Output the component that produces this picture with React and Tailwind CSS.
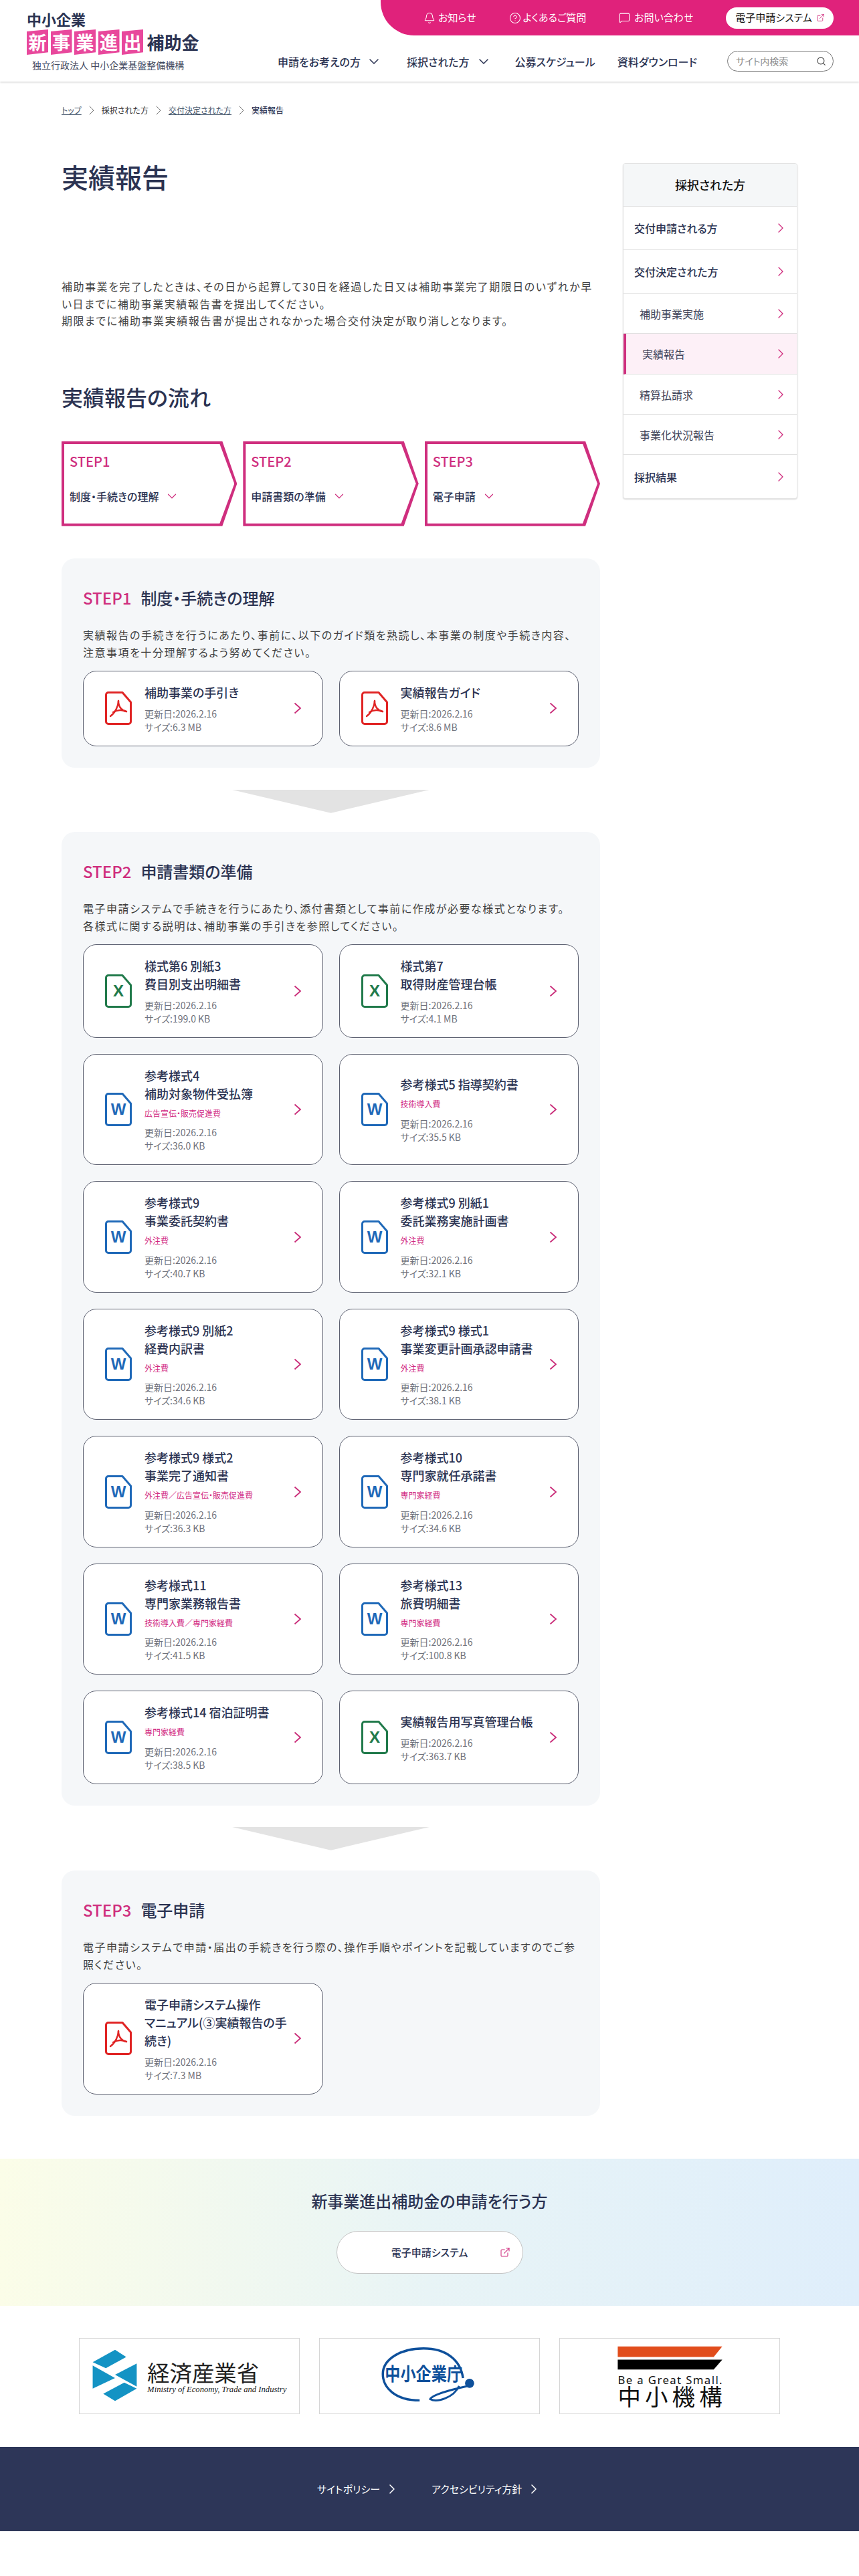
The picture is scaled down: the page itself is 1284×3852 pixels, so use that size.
import React from "react";
import { Bell, CircleHelp, MessageSquare, ExternalLink, Search, ChevronDown, ChevronRight } from "lucide-react";

const FONT = { fontFamily: '"Noto Sans CJK JP","Noto Sans",sans-serif' };

function DocIcon({ type }) {
  const color = type === "pdf" ? "#e02424" : type === "x" ? "#217a4b" : "#1f69b8";
  return (
    <svg width="40" height="50" viewBox="0 0 40 50" className="shrink-0" fill="none">
      <path d="M5 1.5H26L38.5 16V45a3.5 3.5 0 0 1-3.5 3.5H5A3.5 3.5 0 0 1 1.5 45V5A3.5 3.5 0 0 1 5 1.5Z" fill="#fff" stroke={color} strokeWidth="3" strokeLinejoin="round" />
      {type === "pdf" && (
        <g stroke={color} strokeWidth="2.4" strokeLinecap="round" fill="none">
          <path d="M20 14C20 22 15 32 8 37" />
          <path d="M20 14C20 24 26 29 32 30" />
          <path d="M12 31C18 27.5 26 27 32 30" />
        </g>
      )}
      {type === "x" && <text x="20" y="33" textAnchor="middle" fontSize="24" fontWeight="700" fill={color} fontFamily="Liberation Sans, sans-serif">X</text>}
      {type === "w" && <text x="20" y="33" textAnchor="middle" fontSize="24" fontWeight="700" fill={color} fontFamily="Liberation Sans, sans-serif">W</text>}
    </svg>
  );
}

function FileCard({ type, title, tag, date = "2026.2.16", size }) {
  return (
    <a className="flex items-center bg-white border border-[#5c6070] rounded-[20px] pl-[32px] pr-[31px] py-[18px]">
      <DocIcon type={type} />
      <div className="ml-[19px] w-[220px] shrink-0">
        <div className="text-[18px] leading-[27px] font-medium text-[#2b3352] whitespace-pre-line">{title}</div>
        {tag && <div className="mt-[7px] pb-[1.5px] text-[12px] leading-[18px] text-[#d1277f]">{tag}</div>}
        <div className="mt-[8px] text-[14px] leading-[20px] text-[#6f727b]">更新日:{date}</div>
        <div className="text-[14px] leading-[20px] text-[#6f727b]">サイズ:{size}</div>
      </div>
      <svg width="12" height="18" viewBox="0 0 12 18" className="ml-auto shrink-0" fill="none">
        <path d="M1.5 1.5 10 9 1.5 16.5" stroke="#c92b78" strokeWidth="1.8" />
      </svg>
    </a>
  );
}

function StepPanel({ step, title, text, children }) {
  return (
    <section className="bg-[#f5f7f9] rounded-[20px] px-[32px] pt-[41px] pb-[32px]">
      <h3 className="flex text-[24px] leading-[36px] font-medium text-[#2b3352]">
        <span className="text-[#cf2e7e] mr-[14px]">{step}</span>
        {title}
      </h3>
      <p className="mt-[24px] text-[16px] leading-[26px] tracking-[0.095em] text-[#3f3f3f] whitespace-pre-line">{text}</p>
      <div className="mt-[15px] grid grid-cols-2 gap-6">{children}</div>
    </section>
  );
}

function DownArrow() {
  return <div className="mx-auto w-[297px] h-[35px] bg-[#e3e3e3] [clip-path:polygon(0_0,100%_0,50%_100%)]" />;
}

function FlowStep({ step, label }) {
  return (
    <div className="flex-1 h-[127px] p-[4px] bg-[#cf2e7e] [clip-path:polygon(0_0,calc(100%-22px)_0,100%_50%,calc(100%-22px)_100%,0_100%)]">
      <div className="h-full bg-white pl-[8px] pt-[11px] [clip-path:polygon(0_0,calc(100%-22px)_0,100%_50%,calc(100%-22px)_100%,0_100%)]">
        <div className="text-[20px] leading-[30px] font-medium text-[#cf2e7e]">{step}</div>
        <div className="mt-[25px] flex items-center text-[16px] leading-[24px] font-medium text-[#2b3352]">
          {label}
          <ChevronDown className="ml-[9px] w-[22px] h-[22px] text-[#cf2e7e]" strokeWidth={1.3} />
        </div>
      </div>
    </div>
  );
}

function SideRow({ label, h, child, active, last }) {
  return (
    <a className={`flex items-center justify-between pr-[12px] ${h} ${last ? "" : "border-b border-[#e0e0e0]"} ${child ? "pl-[24px] font-normal text-[#3d4257]" : "pl-[16px] font-medium text-[#2b3352]"} ${active ? "bg-[#fdf0f7] border-l-4 border-l-[#cf2e7e] pl-[20px]" : ""} text-[16px]`}>
      {label}
      <ChevronRight className="w-[24px] h-[24px] text-[#cf2e7e]" strokeWidth={1.3} />
    </a>
  );
}

function Logo() {
  const tiles = ["新", "事", "業", "進", "出"];
  return (
    <div className="pl-[40px] pt-[14px] w-[330px] shrink-0">
      <div className="text-[22px] leading-[28px] font-bold text-[#2b3352]">中小企業</div>
      <div className="mt-[2px] flex items-center">
        {tiles.map((t) => (
          <span key={t} className="w-[32px] h-[38px] mr-[3.5px] flex items-center justify-center bg-[#e8489c] text-white text-[27px] font-bold [clip-path:polygon(0_8%,100%_0,100%_90%,0_100%)]">{t}</span>
        ))}
        <span className="ml-[2px] text-[26px] leading-[38px] font-bold text-[#2b3352]">補助金</span>
      </div>
      <div className="mt-[5px] pl-[8px] text-[14px] leading-[20px] text-[#444a60] whitespace-nowrap">独立行政法人 中小企業基盤整備機構</div>
    </div>
  );
}

function Header() {
  const nav = "text-[16px] font-medium text-[#2b3352] whitespace-nowrap";
  return (
    <header className="h-[122px] bg-white shadow-[0_1px_3px_rgba(0,0,0,0.2)] flex">
      <Logo />
      <div className="flex-1 flex flex-col">
        <div className="ml-auto w-[715px] h-[53px] bg-[#e0227b] rounded-bl-[50px] flex items-center pl-[64px] text-white text-[15px]">
          <a className="flex items-center"><Bell className="w-[18px] h-[18px] mr-[4px]" strokeWidth={1.4} />お知らせ</a>
          <a className="flex items-center ml-[49px]"><CircleHelp className="w-[18px] h-[18px] mr-[3px]" strokeWidth={1.4} />よくあるご質問</a>
          <a className="flex items-center ml-[49px]"><MessageSquare className="w-[17px] h-[17px] mr-[6px]" strokeWidth={1.6} />お問い合わせ</a>
          <a className="flex items-center ml-[49px] w-[161px] h-[32px] bg-white rounded-full text-[#111] pl-[14px]">電子申請システム<ExternalLink className="ml-[6px] w-[13px] h-[13px] text-[#cf2e7e]" strokeWidth={1.6} /></a>
        </div>
        <div className="flex items-center mt-[23px] pl-[85px]">
          <a className={`${nav} flex items-center`}>申請をお考えの方<ChevronDown className="ml-[8px] w-[24px] h-[24px]" strokeWidth={1.5} /></a>
          <a className={`${nav} flex items-center ml-[37px]`}>採択された方<ChevronDown className="ml-[9px] w-[24px] h-[24px]" strokeWidth={1.5} /></a>
          <a className={`${nav} ml-[35px]`}>公募スケジュール</a>
          <a className={`${nav} ml-[33px]`}>資料ダウンロード</a>
          <div className="ml-[45px] w-[159px] h-[31px] rounded-full border border-[#777] flex items-center justify-between pl-[12px] pr-[10px] text-[14px] text-[#8b8b8b]">
            サイト内検索
            <Search className="w-[15px] h-[15px] text-[#444]" strokeWidth={1.8} />
          </div>
        </div>
      </div>
    </header>
  );
}

function Crumb() {
  const sep = <ChevronRight className="mx-[3px] w-[24px] h-[24px] -my-[4px] text-[#777]" strokeWidth={1} />;
  return (
    <nav className="pt-[34px] pl-[92px] flex items-center text-[12px] leading-[18px] text-[#333]">
      <a className="underline text-[#44566b]">トップ</a>{sep}
      <span>採択された方</span>{sep}
      <a className="underline text-[#44566b]">交付決定された方</a>{sep}
      <span className="font-medium text-[#2b3352]">実績報告</span>
    </nav>
  );
}

function Sidebar() {
  return (
    <aside className="ml-[34px] w-[261px] shrink-0 mt-[70px] self-start bg-white rounded-[4px] border border-[#e3e3e3] shadow-[0_1px_2px_rgba(0,0,0,0.15)] overflow-hidden">
      <div className="h-[64px] flex items-center justify-center bg-[#f5f7f8] border-b border-[#e0e0e0] text-[18px] font-medium text-[#111]">採択された方</div>
      <SideRow label="交付申請される方" h="h-[65px]" />
      <SideRow label="交付決定された方" h="h-[65px]" />
      <SideRow label="補助事業実施" h="h-[60px]" child />
      <SideRow label="実績報告" h="h-[61px]" child active />
      <SideRow label="精算払請求" h="h-[60px]" child />
      <SideRow label="事業化状況報告" h="h-[60px]" child />
      <SideRow label="採択結果" h="h-[65px]" last />
    </aside>
  );
}

function MetiLogo() {
  return (
    <svg viewBox="0 0 330 114" className="w-full h-full">
      <g fill="#1493c4">
        <polygon points="52,17 69,28 38,45 18,36" />
        <polygon points="18,41 52,60 18,76" />
        <polygon points="85,38 85,73 52,55" />
        <polygon points="66,67 85,76 52,95 34,84" />
      </g>
      <text x="101" y="65" fontSize="34" fill="#222" fontFamily='"Noto Sans CJK JP",sans-serif'>経済産業省</text>
      <text x="101" y="81" fontSize="13" fontStyle="italic" fill="#222" fontFamily='"Liberation Serif",serif' textLength="212" lengthAdjust="spacingAndGlyphs">Ministry of Economy, Trade and Industry</text>
    </svg>
  );
}

function SmeLogo() {
  return (
    <svg viewBox="0 0 330 114" className="w-full h-full">
      <path d="M150 94C112 94 94 74 94 54C94 32 120 15 156 15C190 15 212 32 216 60" fill="none" stroke="#0e509b" strokeWidth="3.5" />
      <circle cx="226" cy="68" r="7" fill="#0e509b" />
      <path d="M224 72C206 76 170 84 166 92C176 98 202 90 210 72" fill="none" stroke="#0e509b" strokeWidth="3" />
      <text x="97" y="64" fontSize="28" fontWeight="700" fill="#0e509b" fontFamily='"Noto Sans CJK JP",sans-serif' textLength="118" lengthAdjust="spacingAndGlyphs">中小企業庁</text>
    </svg>
  );
}

function SmrjLogo() {
  return (
    <svg viewBox="0 0 330 114" className="w-full h-full">
      <polygon points="86,12 245,12 232,28 86,28" fill="#e14d1c" />
      <polygon points="86,32 245,32 232,47 86,47" fill="#000" />
      <text x="86" y="69" fontSize="17" fill="#111" fontFamily='"Noto Sans",sans-serif' textLength="159" lengthAdjust="spacing">Be a Great Small.</text>
      <text x="86" y="102" fontSize="35" fill="#111" fontFamily='"Noto Sans CJK JP",sans-serif' textLength="159" lengthAdjust="spacing">中小機構</text>
    </svg>
  );
}

export default function App() {
  return (
    <div style={FONT} className="bg-white text-[#333] [font-feature-settings:'palt']">
      <Header />
      <Crumb />
      <div className="flex pl-[92px]">
        <main className="w-[805px] shrink-0 pt-[60px]">
          <h1 className="text-[40px] leading-[60px] font-medium text-[#2b3352]">実績報告</h1>
          <p className="mt-[122px] text-[16px] leading-[25.6px] tracking-[0.095em] text-[#3f3f3f]">
            補助事業を完了したときは、その日から起算して30日を経過した日又は補助事業完了期限日のいずれか早い日までに補助事業実績報告書を提出してください。<br />
            期限までに補助事業実績報告書が提出されなかった場合交付決定が取り消しとなります。
          </p>
          <h2 className="mt-[76px] text-[32px] leading-[48px] font-medium text-[#2b3352]">実績報告の流れ</h2>
          <div className="mt-[43px] flex gap-[9px]">
            <FlowStep step="STEP1" label="制度・手続きの理解" />
            <FlowStep step="STEP2" label="申請書類の準備" />
            <FlowStep step="STEP3" label="電子申請" />
          </div>

          <div className="mt-[48px]">
            <StepPanel step="STEP1" title="制度・手続きの理解" text="実績報告の手続きを行うにあたり、事前に、以下のガイド類を熟読し、本事業の制度や手続き内容、注意事項を十分理解するよう努めてください。">
              <FileCard type="pdf" title="補助事業の手引き" size="6.3 MB" />
              <FileCard type="pdf" title="実績報告ガイド" size="8.6 MB" />
            </StepPanel>
          </div>
          <div className="mt-[33px] mb-[28px]"><DownArrow /></div>
          <StepPanel step="STEP2" title="申請書類の準備" text={"電子申請システムで手続きを行うにあたり、添付書類として事前に作成が必要な様式となります。\n各様式に関する説明は、補助事業の手引きを参照してください。"}>
            <FileCard type="x" title={"様式第6 別紙3\n費目別支出明細書"} size="199.0 KB" />
            <FileCard type="x" title={"様式第7\n取得財産管理台帳"} size="4.1 MB" />
            <FileCard type="w" title={"参考様式4\n補助対象物件受払簿"} tag="広告宣伝・販売促進費" size="36.0 KB" />
            <FileCard type="w" title="参考様式5 指導契約書" tag="技術導入費" size="35.5 KB" />
            <FileCard type="w" title={"参考様式9\n事業委託契約書"} tag="外注費" size="40.7 KB" />
            <FileCard type="w" title={"参考様式9 別紙1\n委託業務実施計画書"} tag="外注費" size="32.1 KB" />
            <FileCard type="w" title={"参考様式9 別紙2\n経費内訳書"} tag="外注費" size="34.6 KB" />
            <FileCard type="w" title={"参考様式9 様式1\n事業変更計画承認申請書"} tag="外注費" size="38.1 KB" />
            <FileCard type="w" title={"参考様式9 様式2\n事業完了通知書"} tag="外注費／広告宣伝・販売促進費" size="36.3 KB" />
            <FileCard type="w" title={"参考様式10\n専門家就任承諾書"} tag="専門家経費" size="34.6 KB" />
            <FileCard type="w" title={"参考様式11\n専門家業務報告書"} tag="技術導入費／専門家経費" size="41.5 KB" />
            <FileCard type="w" title={"参考様式13\n旅費明細書"} tag="専門家経費" size="100.8 KB" />
            <FileCard type="w" title="参考様式14 宿泊証明書" tag="専門家経費" size="38.5 KB" />
            <FileCard type="x" title="実績報告用写真管理台帳" size="363.7 KB" />
          </StepPanel>
          <div className="mt-[32px] mb-[30px]"><DownArrow /></div>
          <StepPanel step="STEP3" title="電子申請" text="電子申請システムで申請・届出の手続きを行う際の、操作手順やポイントを記載していますのでご参照ください。">
            <FileCard type="pdf" title={"電子申請システム操作\nマニュアル(③実績報告の手\n続き)"} size="7.3 MB" />
          </StepPanel>
        </main>
        <Sidebar />
      </div>

      <section className="mt-[64px] h-[220px] bg-gradient-to-r from-[#fbfde8] via-[#e8f4f6] to-[#dfeefb] pt-[45px] flex flex-col items-center">
        <h2 className="text-[24px] leading-[36px] font-medium text-[#2b3352]">新事業進出補助金の申請を行う方</h2>
        <a className="mt-[27px] relative w-[279px] h-[64px] rounded-full bg-white border border-[#c4c4c4] flex items-center justify-center text-[15px] font-medium text-[#2b3352]">
          電子申請システム
          <ExternalLink className="absolute right-[18px] w-[16px] h-[16px] text-[#cf2e7e]" strokeWidth={1.6} />
        </a>
      </section>

      <div className="mt-[48px] flex justify-center gap-[29px]">
        <div className="w-[330px] h-[114px] border border-[#d5d5d5] bg-white"><MetiLogo /></div>
        <div className="w-[330px] h-[114px] border border-[#d5d5d5] bg-white"><SmeLogo /></div>
        <div className="w-[330px] h-[114px] border border-[#d5d5d5] bg-white"><SmrjLogo /></div>
      </div>

      <footer className="mt-[49px] h-[126px] bg-[#2d3658] flex items-center justify-center gap-[47px] text-white text-[15px]">
        <a className="flex items-center">サイトポリシー<ChevronRight className="ml-[6px] w-[24px] h-[24px]" strokeWidth={1.5} /></a>
        <a className="flex items-center">アクセシビリティ方針<ChevronRight className="ml-[6px] w-[24px] h-[24px]" strokeWidth={1.5} /></a>
      </footer>
      <div className="h-[67px]" />
    </div>
  );
}
